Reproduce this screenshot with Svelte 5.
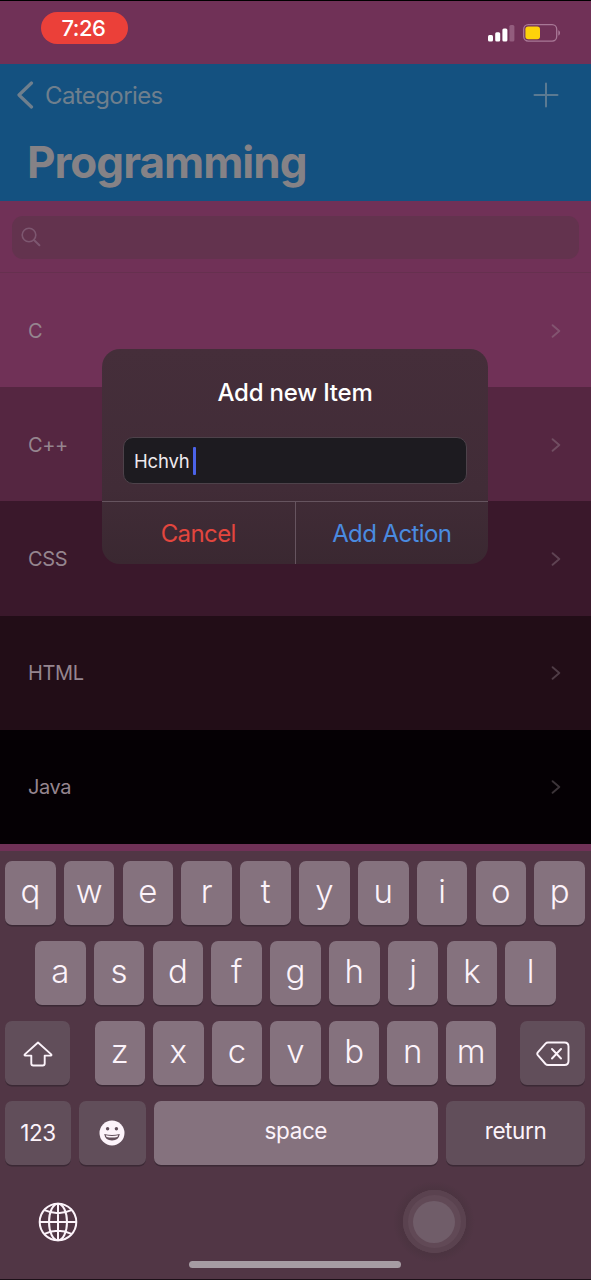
<script>
  const items = [
    { name: 'C', color: '#703157' },
    { name: 'C++', color: '#552641' },
    { name: 'CSS', color: '#3a182b' },
    { name: 'HTML', color: '#220d17' },
    { name: 'Java', color: '#050004' }
  ];
  const top = [...'qwertyuiop'];
  const home = [...'asdfghjkl'];
  const bottom = [...'zxcvbnm'];
</script>

<div class="screen">
  <div class="status">
    <div class="clock"><span>7:26</span></div>
    <div class="indicators">
      <svg width="27" height="17" viewBox="0 0 27 17">
        <rect x="0" y="10" width="5" height="6.5" rx="1.5" fill="#fff" />
        <rect x="7.2" y="7.2" width="5" height="9.3" rx="1.5" fill="#fff" />
        <rect x="14.4" y="3.6" width="5" height="12.9" rx="1.5" fill="#fff" />
        <rect x="21.4" y="0" width="5" height="16.5" rx="1.5" fill="#935d7e" />
      </svg>
      <svg width="38" height="18" viewBox="0 0 38 18">
        <rect x="0.7" y="0.7" width="33" height="16.4" rx="4.5" fill="none" stroke="#a87896" stroke-width="1.3" />
        <rect x="2.4" y="2.5" width="14.6" height="12.8" rx="2.8" fill="#fdd20a" />
        <path d="M35.3 6.2c2.3.9 2.3 4.5 0 5.4z" fill="#a87896" />
      </svg>
    </div>
  </div>

  <header>
    <div class="nav">
      <div class="back">
        <svg width="18" height="28" viewBox="0 0 18 28"><path d="M15.5 2 3 14l12.5 12" fill="none" stroke="#6f7f8d" stroke-width="3.2" stroke-linecap="round" stroke-linejoin="round" /></svg>
        <span>Categories</span>
      </div>
      <svg width="26" height="26" viewBox="0 0 26 26"><path d="M1.5 13h23M13 1.5v23" stroke="#5b7a92" stroke-width="2" stroke-linecap="round" /></svg>
    </div>
    <h1>Programming</h1>
  </header>

  <div class="search">
    <div class="field">
      <svg width="20" height="20" viewBox="0 0 20 20"><circle cx="8" cy="8" r="6.8" fill="none" stroke="#7d5770" stroke-width="1.6" /><path d="m13 13 5.4 5.2" stroke="#7d5770" stroke-width="2" stroke-linecap="round" /></svg>
    </div>
  </div>

  <ul>
    {#each items as item}
      <li style:background={item.color}>
        <span>{item.name}</span>
        <svg width="10" height="14" viewBox="0 0 10 14"><path d="M1.6 1.2 8.300 7l-6.700 5.800" fill="none" stroke="#a798a2" stroke-opacity=".34" stroke-width="1.9" stroke-linecap="round" stroke-linejoin="round" /></svg>
      </li>
    {/each}
  </ul>

  <section class="keyboard">
    <div class="keys">
      {#each top as k}<div class="key">{k}</div>{/each}
    </div>
    <div class="keys home">
      {#each home as k}<div class="key">{k}</div>{/each}
    </div>
    <div class="keys">
      <div class="key dark shift">
        <svg width="30" height="26" viewBox="0 0 30 26"><path d="M15 1.500 1.800 13.400q-.8 1 .5 1.200H8.300V22.500q0 2 2 2h9.400q2 0 2-2V14.600h6q1.300-.2.5-1.200z" fill="none" stroke="#fcf3fa" stroke-width="1.900" stroke-linejoin="round" /></svg>
      </div>
      <div class="letters">
        {#each bottom as k}<div class="key">{k}</div>{/each}
      </div>
      <div class="key dark shift">
        <svg width="34" height="26" viewBox="0 0 34 26"><path d="M12 1.500H28.500Q32.500 1.500 32.500 5.500V20Q32.500 24 28.500 24H12Q10.500 24 9.500 23L1.800 14.200Q.7 12.800 1.800 11.400L9.500 2.600Q10.500 1.500 12 1.500zM16 8l9 9.500M25 8l-9 9.500" fill="none" stroke="#fcf3fa" stroke-width="1.900" stroke-linecap="round" stroke-linejoin="round" /></svg>
      </div>
    </div>
    <div class="keys functions">
      <div class="key dark num">123</div>
      <div class="key dark emoji">
        <svg width="26" height="26" viewBox="0 0 26 26">
          <circle cx="13" cy="13" r="12.500" fill="#fcf3fa" />
          <circle cx="8.600" cy="8.800" r="1.700" fill="#614e5a" /><circle cx="17.400" cy="8.800" r="1.700" fill="#614e5a" />
          <path d="M5.200 14q7.800 2 15.600 0-1 6.500-7.800 6.500T5.200 14z" fill="#614e5a" />
          <path d="M6.800 15.200q6.200 1.400 12.400 0-.3 1.300-.8 1.700-5.400 1.200-10.800 0-.5-.4-.8-1.700z" fill="#fcf3fa" />
        </svg>
      </div>
      <div class="key space">space</div>
      <div class="key dark return">return</div>
    </div>
    <div class="tray">
      <svg width="40" height="40" viewBox="0 0 40 40" fill="none" stroke="#fcf3fa" stroke-width="2">
        <circle cx="20" cy="20" r="18.300" />
        <ellipse cx="20" cy="20" rx="9" ry="18.300" />
        <path d="M20 1.700v36.600M1.700 20h36.600M6.500 8.200q13.500 6 27 0M6.500 31.800q13.500-6 27 0" />
      </svg>
      <div class="touch"><div class="ring"><div class="dot"></div></div></div>
    </div>
    <div class="home-bar"></div>
  </section>

  <div class="dialog">
    <h2>Add new Item</h2>
    <div class="input"><span>Hchvh</span><i></i></div>
    <div class="actions">
      <div class="cancel">Cancel</div>
      <div class="add">Add Action</div>
    </div>
  </div>
</div>

<style>
  :global(body) { margin: 0; background: #703157; }
  * { box-sizing: border-box; }
  svg { display: block; flex: none; }
  .screen {
    position: relative; width: 591px; height: 1280px; overflow: hidden;
    display: flex; flex-direction: column;
    background: #703157; font-family: Inter, "Liberation Sans", sans-serif;
    border-top: 1px solid #000; border-bottom: 1px solid #1c1018;
  }
  .status { height: 63px; flex: none; display: flex; justify-content: space-between; padding: 11px 30px 0 41px; }
  .clock {
    width: 87px; height: 32px; border-radius: 16px; background: #eb4039; color: #fff;
    display: flex; align-items: center; justify-content: center;
    font-size: 22px; font-weight: 500; letter-spacing: -0.500px; padding-right: 2px;
  }
  .indicators { display: flex; gap: 8px; padding-top: 12px; }
  .indicators svg:first-child { margin-top: 1px; }
  header { height: 137px; flex: none; background: #145180; padding: 0 32px 0 16px; }
  .nav { height: 62px; display: flex; align-items: center; justify-content: space-between; }
  .back { display: flex; align-items: center; gap: 11px; font-size: 24px; letter-spacing: -0.600px; color: #6f7f8d; }
  h1 { margin: 8px 0 0 11px; font-size: 44px; line-height: 56px; font-weight: 700; letter-spacing: -1px; color: #858286; }
  .search { height: 72px; flex: none; padding: 15px 12px 0; border-bottom: 1px solid #66304f; }
  .field { height: 43px; border-radius: 11px; background: #63334e; display: flex; align-items: center; padding: 0 0 2px 9px; }
  ul { list-style: none; margin: 0; padding: 0; flex: none; height: 571px; display: flex; flex-direction: column; }
  li { flex: 1; display: flex; align-items: center; justify-content: space-between; padding: 1px 30px 0 28px; font-size: 20px; letter-spacing: -0.400px; color: #95858f; }
  .keyboard { margin-top: 7px; flex: 1; background: #513645; padding: 10px 6px 0 5px; display: flex; flex-direction: column; }
  .keys { display: flex; gap: 8.200px; height: 64px; margin-bottom: 16px; flex: none; justify-content: space-between; }
  .home { padding: 0 29px 0 30px; }
  .letters { width: 402px; display: flex; gap: 8.200px; position: relative; left: 0.500px; }
  .key {
    flex: 1; display: flex; align-items: center; justify-content: center;
    background: #85727e; border-radius: 7px; box-shadow: 0 1.500px 0 #3b2935; color: #fcf3fa;
    font-size: 33px; font-weight: 350; line-height: 40px; padding-bottom: 4px;
  }
  .dark { background: #614e5a; }
  .shift { flex: 0 0 65px; padding: 2px 0 0; }
  .functions .key { font-size: 22.500px; font-weight: 400; letter-spacing: -0.400px; }
  .functions .num { flex: 0 0 66px; padding: 0; }
  .functions .emoji { flex: 0 0 66.500px; padding: 0; }
  .functions .return { flex: 0 0 139px; }
  .tray { height: 83px; flex: none; display: flex; justify-content: space-between; align-items: center; padding: 0 110px 0 33px; margin-top: -1px; }
  .touch { width: 82px; height: 82px; border-radius: 50%; background: radial-gradient(closest-side, #4c3441 80%, #513645); display: grid; place-items: center; }
  .ring { width: 63px; height: 63px; border-radius: 50%; background: #614956; box-shadow: inset 0 0 0 5px #5a424f; display: grid; place-items: center; }
  .dot { width: 42px; height: 42px; border-radius: 50%; background: #705d69; }
  .home-bar { width: 212px; height: 7px; border-radius: 4px; background: #a69ca3; margin: -2.500px 0 0 184px; }
  .dialog {
    position: absolute; left: 102px; top: 348px; width: 386px; height: 215px; border-radius: 18px; overflow: hidden;
    background: linear-gradient(#452e3a, #412c37 65%, #3a2831);
    display: flex; flex-direction: column;
  }
  h2 { margin: 29px 0 0; text-align: center; color: #fff; font-size: 24px; line-height: 30px; font-weight: 550; letter-spacing: -0.200px; }
  .input {
    margin: 29px 21px 0; height: 47px; border: 1.500px solid #4d424a; border-radius: 10px; background: #1d1b20;
    display: flex; align-items: center; padding: 1px 0 0 10px; gap: 4px; color: #eee9ed; font-size: 18.500px; letter-spacing: -0.200px;
  }
  .input i { width: 3px; height: 28px; border-radius: 1px; background: #4b63e8; }
  .actions { margin-top: 17px; flex: 1; border-top: 1px solid #66545f; display: flex; }
  .actions div { flex: 1; display: flex; align-items: center; justify-content: center; font-size: 24px; letter-spacing: -0.600px; }
  .actions .cancel { color: #e3463e; border-right: 1px solid #66545f; }
  .actions .add { color: #4a8be0; }
</style>
